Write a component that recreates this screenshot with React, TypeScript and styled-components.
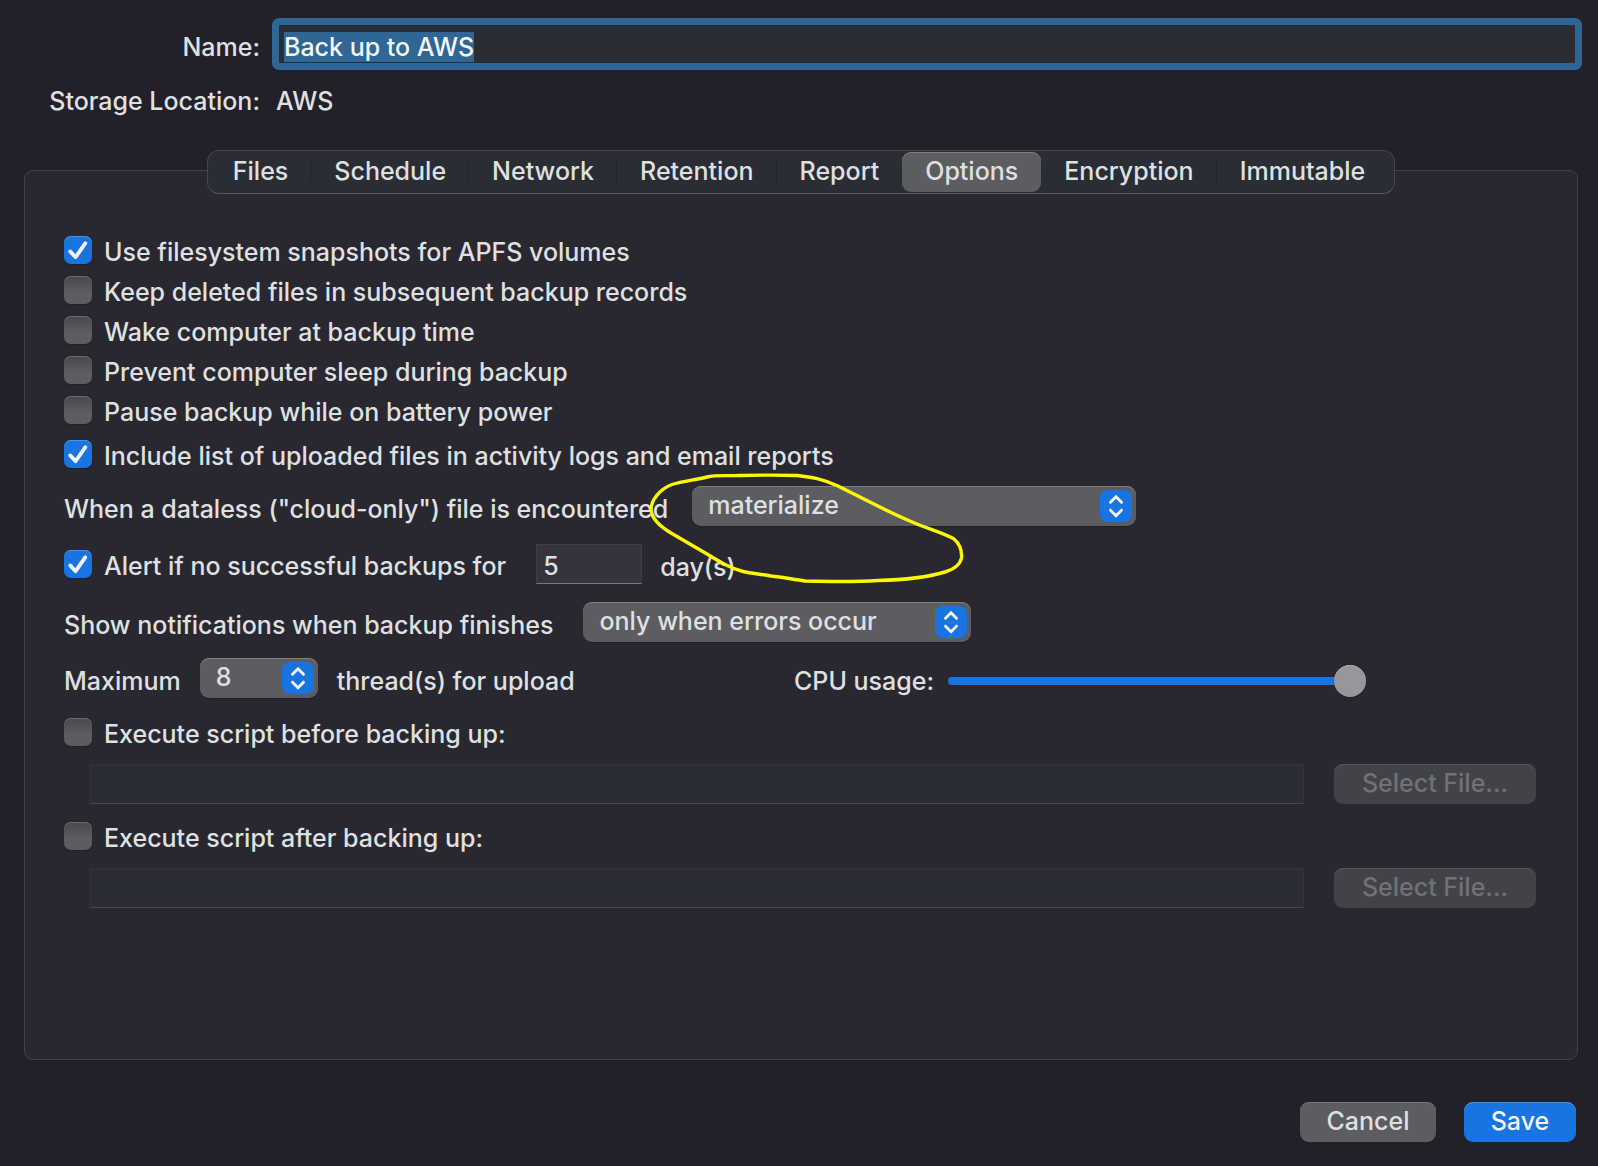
import React, { useEffect, useRef } from 'react';
import styled, { createGlobalStyle, css } from 'styled-components';

const color = {
  window: '#22212a',
  panel: '#292831',
  line: '#43424a',
  text: '#dfe0e1',
  field: '#2b2d35',
  control: '#5c5d61',
  accent: '#1874e0',
  focus: '#2e6795',
};

const GlobalStyle = createGlobalStyle`
  *, *::before, *::after { box-sizing: border-box; }
  body { margin: 0; background: ${color.window}; }
  body, input, select, button {
    font-family: Inter, "Liberation Sans", sans-serif;
    font-size: 25px;
    font-weight: 500;
    line-height: 32px;
    color: ${color.text};
  }
`;

const Window = styled.main`
  min-height: 100vh;
  display: flex;
  flex-direction: column;
  padding: 18px 20px 24px 24px;
`;

const Header = styled.header`
  display: grid;
  grid-template-columns: 236px minmax(0, 1fr);
  column-gap: 12px;
  row-gap: 9px;
  align-items: center;
  margin-right: -4px;
`;

const captionText = css`
  padding-top: 6px;
  white-space: nowrap;
`;

const Caption = styled.label`
  ${captionText}
`;

const HeaderLabel = styled.label`
  ${captionText}
  text-align: right;
`;

const HeaderValue = styled.output`
  ${captionText}
  padding-left: 4px;
`;

const NameInput = styled.input`
  width: 100%;
  height: 52px;
  padding: 6px 5px 0;
  border: 7px solid ${color.focus};
  border-radius: 7px;
  background: ${color.field};
  line-height: 34px;
  outline: none;
  &::selection {
    background: #2f6693;
    color: #f4f6f8;
  }
`;

const TabBar = styled.div`
  position: relative;
  z-index: 1;
  align-self: center;
  display: flex;
  height: 44px;
  margin: 33px 0 -24px;
  padding: 1px 6px 1px 2px;
  border: 1px solid #45454c;
  border-bottom-color: #5a5a61;
  border-radius: 12px;
  background: #2b2d35;
`;

const Tab = styled.button<{ $active?: boolean; $divider?: boolean }>`
  display: flex;
  align-items: center;
  padding: 0 23px 2px;
  border: 0;
  border-radius: 9px;
  background: ${(p) => (p.$active ? color.control : 'transparent')};
  box-shadow: ${(p) => (p.$active ? 'inset 0 1px 0 #7d7e81' : 'none')};
  &::after {
    content: '';
    width: 1px;
    height: 24px;
    margin-right: -23px;
    margin-left: 22px;
    background: ${(p) => (p.$divider ? '#22232a' : 'transparent')};
  }
`;

const Panel = styled.section`
  flex: 1;
  padding: 65px 41px 40px 39px;
  border: 1px solid ${color.line};
  border-radius: 9px;
  background: ${color.panel};
`;

const Row = styled.div<{ $space: number; $gap?: number }>`
  position: relative;
  display: flex;
  align-items: center;
  gap: ${(p) => p.$gap ?? 0}px;
  margin-top: ${(p) => p.$space}px;
`;

const CheckRow = styled.div<{ $space?: number }>`
  display: flex;
  align-items: center;
  gap: 12px;
  height: 28px;
  margin-top: ${(p) => p.$space ?? 0}px;
`;

const CheckText = styled.label`
  padding-top: 4px;
  white-space: nowrap;
`;

const BoxFrame = styled.span`
  display: grid;
  flex: none;
  & > * { grid-area: 1 / 1; }
`;

const Box = styled.input`
  appearance: none;
  width: 28px;
  height: 28px;
  margin: 0;
  border-radius: 7px;
  background: linear-gradient(#48484d, #5c5d61 60%);
  box-shadow: inset 0 1px 0 #6a6a6f, 0 1px 1px #1f1f26;
  &:checked {
    background: ${color.accent};
    box-shadow: inset 0 1px 0 #4a92e2, 0 1px 1px #1f1f26;
  }
  & + svg { visibility: hidden; pointer-events: none; }
  &:checked + svg { visibility: visible; }
`;

const SelectFrame = styled.span<{ $width: number }>`
  display: grid;
  flex: none;
  align-items: center;
  width: ${(p) => p.$width}px;
  & > * { grid-area: 1 / 1; }
`;

const SelectBox = styled.select`
  appearance: none;
  width: 100%;
  height: 40px;
  padding: 0 40px 2px 16px;
  border: 0;
  border-radius: 9px;
  background: ${color.control};
  box-shadow: inset 0 1px 0 #7d7e81, 0 1px 1px #1f1f26;
`;

const Arrows = styled.svg`
  justify-self: end;
  width: 32px;
  height: 32px;
  margin-right: 4px;
  border-radius: 8px;
  background: ${color.accent};
  pointer-events: none;
`;

const NumberInput = styled.input`
  width: 106px;
  height: 40px;
  padding: 4px 6px 0;
  border: 1px solid #3e3e46;
  border-bottom: 1px solid #77777b;
  border-radius: 0;
  background: #34343d;
`;

const PathInput = styled.input`
  flex: 1;
  min-width: 0;
  height: 40px;
  padding: 4px 6px 0;
  border: 1px solid #33333b;
  border-bottom-color: #47474f;
  border-radius: 0;
  background: ${color.field};
`;

const PathRow = styled.div`
  display: flex;
  align-items: center;
  gap: 30px;
  margin-top: 18px;
  padding-left: 26px;
`;

const Button = styled.button<{ $kind?: 'primary' | 'plain'; $width: number }>`
  width: ${(p) => p.$width}px;
  height: 40px;
  padding: 0 0 2px;
  border: 0;
  border-radius: 9px;
  background: ${(p) => (p.$kind === 'primary' ? color.accent : color.control)};
  box-shadow: inset 0 1px 0 ${(p) => (p.$kind === 'primary' ? '#4a8fdc' : '#77787b')};
  color: ${(p) => (p.$kind === 'primary' ? '#f0f3f7' : color.text)};
  &:disabled {
    background: #424249;
    box-shadow: inset 0 1px 0 #54545a;
    color: #717176;
  }
`;

const UploadRow = styled.div`
  display: grid;
  grid-template-columns: minmax(0, 1fr) 742px;
  align-items: center;
  margin-top: 16px;
`;

const Inline = styled.div<{ $gap: number }>`
  display: flex;
  align-items: center;
  gap: ${(p) => p.$gap}px;
`;

const Slider = styled.input`
  appearance: none;
  width: 418px;
  height: 32px;
  margin: 6px 0 0;
  background: transparent;
  &::-webkit-slider-runnable-track {
    height: 8px;
    border-radius: 4px;
    background: ${color.accent};
  }
  &::-webkit-slider-thumb {
    appearance: none;
    width: 32px;
    height: 32px;
    margin-top: -12px;
    border-radius: 50%;
    background: #97979b;
    box-shadow: inset 0 1px 0 #a8a8ab, 0 1px 1px #1f1f26;
  }
`;

const Marker = styled.svg`
  position: absolute;
  left: 576px;
  top: -26px;
  width: 340px;
  height: 140px;
  pointer-events: none;
  z-index: 2;
`;

const Footer = styled.footer`
  display: flex;
  justify-content: flex-end;
  gap: 28px;
  margin-top: 42px;
  padding-right: 2px;
`;

function Checkbox({ id, label, checked, space }: { id: string; label: string; checked?: boolean; space?: number }) {
  return (
    <CheckRow $space={space}>
      <BoxFrame>
        <Box id={id} type="checkbox" defaultChecked={checked} />
        <svg width="28" height="28" viewBox="0 0 28 28" fill="none" aria-hidden="true">
          <path d="M6.200 15.400 11.600 21.200 21.400 7.200" stroke="#f2f3f5" strokeWidth="3.800" strokeLinecap="round" strokeLinejoin="round" />
        </svg>
      </BoxFrame>
      <CheckText htmlFor={id}>{label}</CheckText>
    </CheckRow>
  );
}

function PopUp({ id, width, options }: { id: string; width: number; options: string[] }) {
  return (
    <SelectFrame $width={width}>
      <SelectBox id={id}>
        {options.map((o) => (
          <option key={o}>{o}</option>
        ))}
      </SelectBox>
      <Arrows viewBox="0 0 32 32" fill="none" aria-hidden="true">
        <path d="M10.500 12.300 16 6.800l5.500 5.500M10.500 20.200 16 25.700l5.500-5.500" stroke="#eef1f5" strokeWidth="3" strokeLinecap="round" strokeLinejoin="miter" />
      </Arrows>
    </SelectFrame>
  );
}

const tabs = ['Files', 'Schedule', 'Network', 'Retention', 'Report', 'Options', 'Encryption', 'Immutable'];
const activeTab = 'Options';

export default function App() {
  const nameRef = useRef<HTMLInputElement>(null);

  useEffect(() => {
    nameRef.current?.focus();
    nameRef.current?.select();
  }, []);

  return (
    <>
      <GlobalStyle />
      <Window>
        <Header>
          <HeaderLabel htmlFor="name">Name:</HeaderLabel>
          <NameInput id="name" ref={nameRef} type="text" defaultValue="Back up to AWS" />
          <HeaderLabel htmlFor="location">Storage Location:</HeaderLabel>
          <HeaderValue id="location">AWS</HeaderValue>
        </Header>

        <TabBar role="tablist">
          {tabs.map((name, i) => (
            <Tab
              key={name}
              type="button"
              role="tab"
              aria-selected={name === activeTab}
              $active={name === activeTab}
              $divider={name !== activeTab && tabs[i + 1] !== activeTab && i < tabs.length - 1}
            >
              {name}
            </Tab>
          ))}
        </TabBar>

        <Panel role="tabpanel" aria-label="Options">
          <Checkbox id="snapshots" label="Use filesystem snapshots for APFS volumes" checked />
          <Checkbox id="keep" label="Keep deleted files in subsequent backup records" space={12} />
          <Checkbox id="wake" label="Wake computer at backup time" space={12} />
          <Checkbox id="sleep" label="Prevent computer sleep during backup" space={12} />
          <Checkbox id="battery" label="Pause backup while on battery power" space={12} />
          <Checkbox id="list" label="Include list of uploaded files in activity logs and email reports" checked space={16} />

          <Row $space={18} $gap={24}>
            <Caption htmlFor="dataless">When a dataless ("cloud-only") file is encountered</Caption>
            <PopUp id="dataless" width={444} options={['materialize', 'skip']} />
            <Marker viewBox="640 460 340 140" fill="none" aria-hidden="true">
              <path
                d="M707 477C715 475 722 476 740 475.500C760 475 780 475 797 475.500C812 477 822 479 838 486C862 498 886 511 911 521.500C928 529 944 533 954 539C961 545 962 552 961.500 558C960 565 955 569 945 572C925 578 900 580 878 580.500C855 582 825 581.500 805 581C793 579.500 783 577 771 576C760 574 751 573.500 743 571.500C730 568 720 562 707 554C695 547 683 540 671 533C661 527 652 519 651 510C651 500 660 489 672 484.500C683 481 695 480 707 477Z"
                stroke="#fdf800"
                strokeWidth="3.400"
                strokeLinejoin="round"
              />
            </Marker>
          </Row>

          <Row $space={18} $gap={30}>
            <Checkbox id="alert" label="Alert if no successful backups for" checked />
            <Inline $gap={18}>
              <NumberInput id="days" type="text" inputMode="numeric" defaultValue="5" aria-label="Days" />
              <Caption htmlFor="days">day(s)</Caption>
            </Inline>
          </Row>

          <Row $space={18} $gap={30}>
            <Caption htmlFor="notify">Show notifications when backup finishes</Caption>
            <PopUp id="notify" width={388} options={['only when errors occur', 'always', 'never']} />
          </Row>

          <UploadRow>
            <Inline $gap={19}>
              <Caption htmlFor="threads">Maximum</Caption>
              <PopUp id="threads" width={118} options={['8', '4', '2', '1']} />
              <Caption htmlFor="threads">thread(s) for upload</Caption>
            </Inline>
            <Inline $gap={14}>
              <Caption htmlFor="cpu">CPU usage:</Caption>
              <Slider id="cpu" type="range" min={0} max={100} defaultValue={100} />
            </Inline>
          </UploadRow>

          <Checkbox id="before" label="Execute script before backing up:" space={20} />
          <PathRow>
            <PathInput type="text" aria-label="Script before backing up" disabled />
            <Button type="button" $width={202} disabled>Select File...</Button>
          </PathRow>
          <Checkbox id="after" label="Execute script after backing up:" space={18} />
          <PathRow>
            <PathInput type="text" aria-label="Script after backing up" disabled />
            <Button type="button" $width={202} disabled>Select File...</Button>
          </PathRow>
        </Panel>

        <Footer>
          <Button type="button" $width={136}>Cancel</Button>
          <Button type="submit" $kind="primary" $width={112}>Save</Button>
        </Footer>
      </Window>
    </>
  );
}
